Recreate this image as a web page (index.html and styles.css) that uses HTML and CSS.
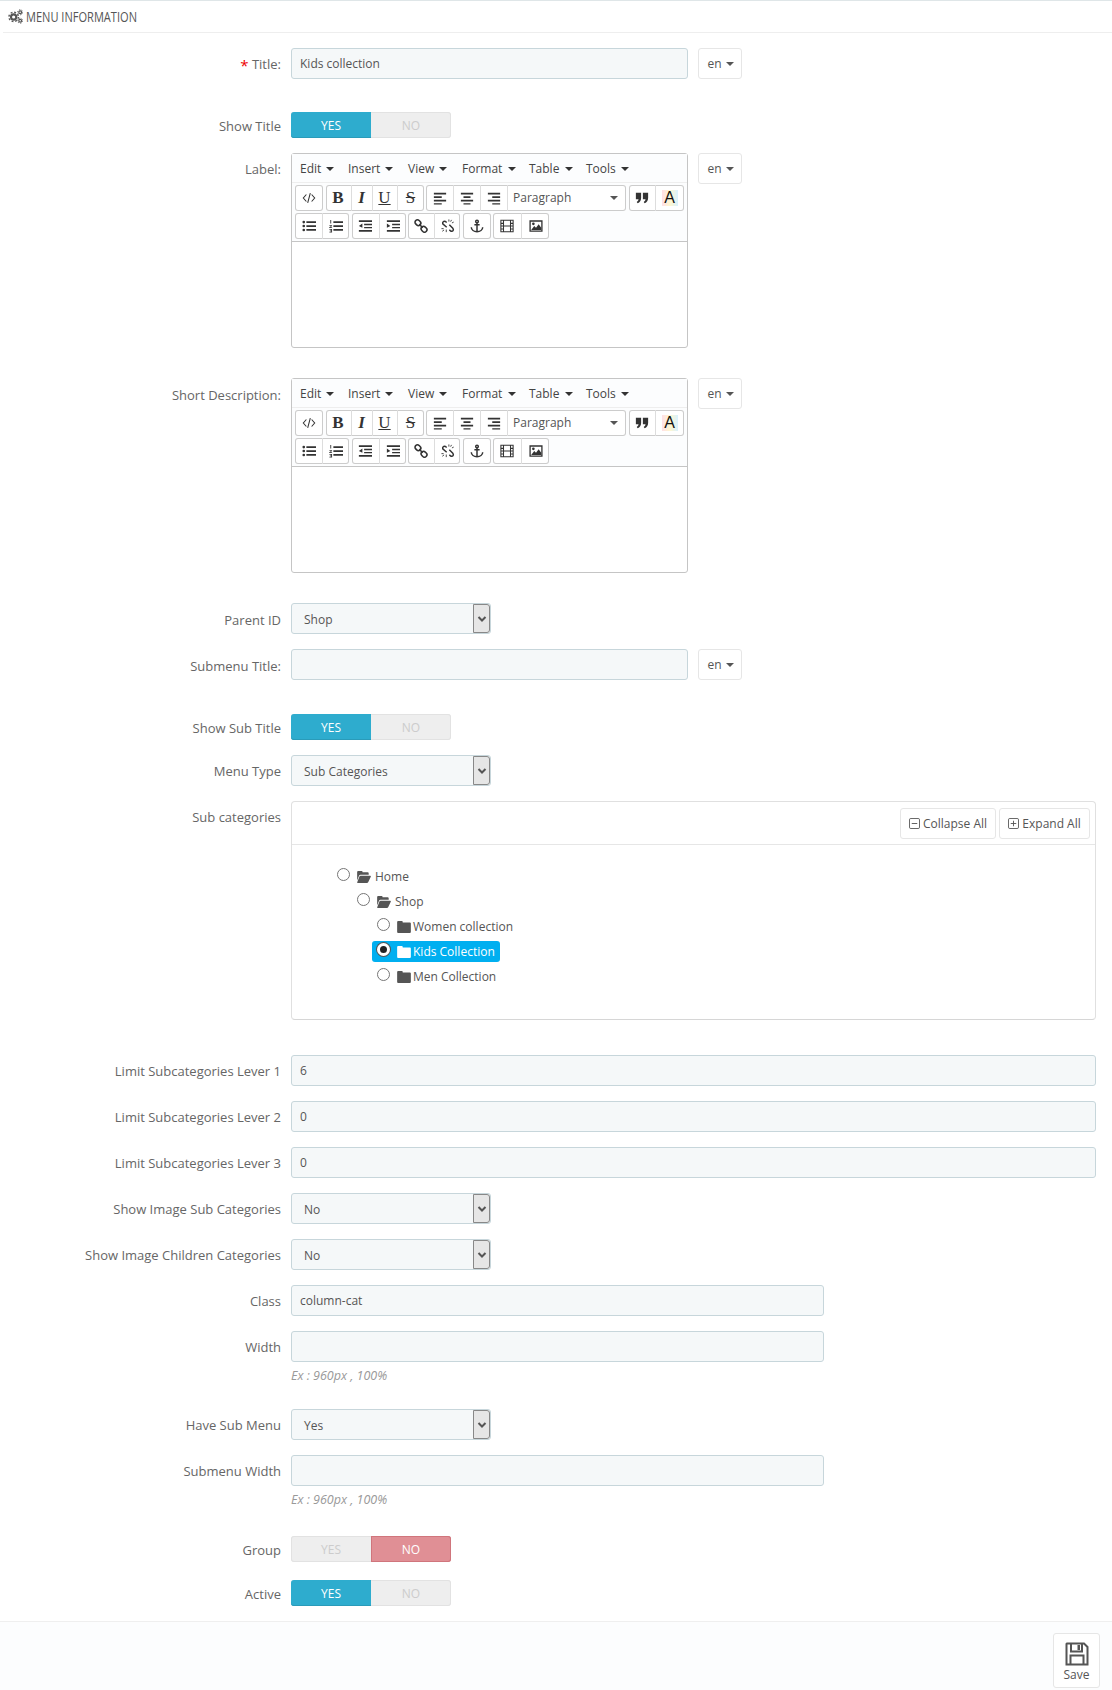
FILE: index.html
```html
<!DOCTYPE html>
<html lang="en">
<head>
<meta charset="utf-8">
<title>Menu Information</title>
<link rel="stylesheet" href="styles.css">
</head>
<body>
<svg class="defs" width="0" height="0" aria-hidden="true">
  <defs>
    <symbol id="i-code" viewBox="0 0 16 16"><path d="M5 4 1.500 8 5 12M11 4l3.500 4L11 12M9.500 2.500 6.500 13.500" fill="none" stroke="#333" stroke-width="1.200"/></symbol>
    <symbol id="i-left" viewBox="0 0 16 16"><path d="M1 2h14v2H1zM1 6h9v2H1zM1 10h14v2H1zM1 14h9v1.500H1z" fill="#333"/></symbol>
    <symbol id="i-center" viewBox="0 0 16 16"><path d="M1 2h14v2H1zM4 6h8v2H4zM1 10h14v2H1zM4 14h8v1.500H4z" fill="#333"/></symbol>
    <symbol id="i-right" viewBox="0 0 16 16"><path d="M1 2h14v2H1zM6 6h9v2H6zM1 10h14v2H1zM6 14h9v1.500H6z" fill="#333"/></symbol>
    <symbol id="i-quote" viewBox="0 0 16 16"><path d="M1 2h6v6c0 3-1.500 5-4 6l-1-1.500c1.300-.7 2-1.800 2-3H1zM9 2h6v6c0 3-1.500 5-4 6l-1-1.500c1.300-.7 2-1.800 2-3H9z" fill="#333"/></symbol>
    <symbol id="i-ul" viewBox="0 0 16 16"><path d="M5 2.500h11v2H5zM5 7h11v2H5zM5 11.500h11v2H5z" fill="#333"/><circle cx="2" cy="3.500" r="1.500" fill="#333"/><circle cx="2" cy="8" r="1.500" fill="#333"/><circle cx="2" cy="12.500" r="1.500" fill="#333"/></symbol>
    <symbol id="i-ol" viewBox="0 0 16 16"><path d="M5 2.500h11v2H5zM5 7h11v2H5zM5 11.500h11v2H5z" fill="#333"/><path d="M1.500 1h1v4h-1zM.5 7h3v1l-2 1.500h2v.8H.3V9.500l2.200-1.600H.5zM.5 11.500h3v4h-3v-.8h2v-.8h-1.500v-.7h1.500v-.9h-2z" fill="#333"/></symbol>
    <symbol id="i-outdent" viewBox="0 0 16 16"><path d="M1 1.500h15v2H1zM7 5.500h9v1.500H7zM7 9h9v1.500H7zM1 12.500h15v2H1zM5 5v5L1 8z" fill="#333"/></symbol>
    <symbol id="i-indent" viewBox="0 0 16 16"><path d="M1 1.500h15v2H1zM7 5.500h9v1.500H7zM7 9h9v1.500H7zM1 12.500h15v2H1zM1 5v5l4-2z" fill="#333"/></symbol>
    <symbol id="i-link" viewBox="0 0 16 16"><g fill="none" stroke="#333" stroke-width="1.800"><rect x="1" y="1.500" width="7" height="5.500" rx="2.700" transform="rotate(45 4.500 4.200)"/><rect x="8" y="9" width="7" height="5.500" rx="2.700" transform="rotate(45 11.500 11.700)"/><path d="M6 6l4 4"/></g></symbol>
    <symbol id="i-unlink" viewBox="0 0 16 16"><g fill="none" stroke="#333" stroke-width="1.700"><path d="M6.500 4 5 2.800C3 2 1.500 3.500 2 5.500L6.500 9.500M9.500 6.500 13.500 10.500c1.500 2 0 4-2 3.500L9.500 12.500"/><path d="M9 .5v2.500M12 1l-1 2M14.500 3.500l-2 1M.5 11h2.500M1.500 14l2-1.500M6 12v3" stroke-width="1"/></g></symbol>
    <symbol id="i-anchor" viewBox="0 0 16 16"><g fill="none" stroke="#333" stroke-width="1.700"><circle cx="8" cy="2.800" r="1.500"/><path d="M8 4v10.500M5 6.500h6M1.500 9.500c0 3 3 5 6.500 5s6.500-2 6.500-5"/></g></symbol>
    <symbol id="i-media" viewBox="0 0 16 16"><path d="M1 1.500h14v13H1zM4 1.500v13M12 1.500v13M1 5h3M1 8h14M1 11.500h3M12 5h3M12 11.500h3" fill="none" stroke="#333" stroke-width="1.200"/></symbol>
    <symbol id="i-image" viewBox="0 0 16 16"><path d="M.5 1.500h15v13H.5zm1.500 1.500v10h12V3z" fill="#333"/><circle cx="5" cy="5.500" r="1.500" fill="#333"/><path d="M2.500 12.500 6 8l2 2 3-4 3 4v2.500z" fill="#333"/></symbol>
    <symbol id="i-folder" viewBox="0 0 16 14"><path d="M1.200 0h4.300a1 1 0 0 1 1 1v.7h8.300A1.200 1.200 0 0 1 16 3v9.800a1.200 1.200 0 0 1-1.200 1.200H1.200A1.200 1.200 0 0 1 0 12.800V1.200A1.200 1.200 0 0 1 1.200 0z" fill="currentColor"/></symbol>
    <symbol id="i-open" viewBox="0 0 16 14"><path d="M0 11V1.200A1.200 1.200 0 0 1 1.200 0h4.100a1 1 0 0 1 1 1v.6h6a1.200 1.200 0 0 1 1.200 1.200V4.500H4a2 2 0 0 0-1.800 1.100zM4 5.500h11.300c.6 0 .9.600.6 1.100L13 12.900c-.3.700-.9 1.100-1.600 1.100H.8c-.6 0-.9-.6-.6-1.100L2.800 6.200C3 5.800 3.500 5.500 4 5.500z" fill="currentColor"/></symbol>
  </defs>
</svg>

<header class="panel-head">
  <svg class="cogs" viewBox="0 0 16 16" aria-hidden="true"><g fill="none" stroke="#555"><circle cx="6" cy="8.500" r="2.800" stroke-width="2.200"/><circle cx="6" cy="8.500" r="5" stroke-width="1.500" stroke-dasharray="2 1.930"/><circle cx="13" cy="3.500" r="1.500" stroke-width="1.300"/><circle cx="13" cy="12.500" r="1.500" stroke-width="1.300"/><circle cx="13" cy="3.500" r="2.700" stroke-width="1" stroke-dasharray="1.300 1.500"/><circle cx="13" cy="12.500" r="2.700" stroke-width="1" stroke-dasharray="1.300 1.500"/></g></svg>
  <span class="head-text">MENU INFORMATION</span>
</header>

<form class="form">
  <div class="row gap-lang">
    <label class="label"><sup class="req">*</sup> Title:</label>
    <div class="field lang">
      <input class="input w-lang" type="text" value="Kids collection">
      <button type="button" class="en">en <i class="caret"></i></button>
    </div>
  </div>

  <div class="row">
    <label class="label label-toggle">Show Title</label>
    <div class="field">
      <div class="toggle"><span class="opt yes">YES</span><span class="opt off">NO</span></div>
    </div>
  </div>

  <div class="row gap-editor">
    <label class="label">Label:</label>
    <div class="field lang">
      <div class="editor">
        <div class="menubar">
          <span class="menu m-edit">Edit <i class="caret"></i></span><span class="menu m-insert">Insert <i class="caret"></i></span><span class="menu m-view">View <i class="caret"></i></span><span class="menu m-format">Format <i class="caret"></i></span><span class="menu m-table">Table <i class="caret"></i></span><span class="menu">Tools <i class="caret"></i></span>
        </div>
        <div class="toolbar">
          <div class="tb-row">
            <div class="grp"><span class="b w28"><svg class="ic"><use href="#i-code"/></svg></span></div>
            <div class="grp"><span class="b w25 t-b">B</span><span class="b w21 t-i">I</span><span class="b w25 t-u">U</span><span class="b w27 t-s">S</span></div>
            <div class="grp"><span class="b w27"><svg class="ic"><use href="#i-left"/></svg></span><span class="b w27"><svg class="ic"><use href="#i-center"/></svg></span><span class="b w27"><svg class="ic"><use href="#i-right"/></svg></span><span class="b para">Paragraph<i class="caret"></i></span></div>
            <div class="grp"><span class="b w26"><svg class="ic"><use href="#i-quote"/></svg></span><span class="b w29"><span class="color-a">A</span></span></div>
          </div>
          <div class="tb-row">
            <div class="grp"><span class="b w27"><svg class="ic"><use href="#i-ul"/></svg></span><span class="b w27"><svg class="ic"><use href="#i-ol"/></svg></span></div>
            <div class="grp"><span class="b w27"><svg class="ic"><use href="#i-outdent"/></svg></span><span class="b w27"><svg class="ic"><use href="#i-indent"/></svg></span></div>
            <div class="grp"><span class="b w26"><svg class="ic"><use href="#i-link"/></svg></span><span class="b w26"><svg class="ic"><use href="#i-unlink"/></svg></span></div>
            <div class="grp"><span class="b w28"><svg class="ic"><use href="#i-anchor"/></svg></span></div>
            <div class="grp"><span class="b w28"><svg class="ic"><use href="#i-media"/></svg></span><span class="b w28"><svg class="ic"><use href="#i-image"/></svg></span></div>
          </div>
        </div>
        <div class="edit-area"></div>
      </div>
      <button type="button" class="en">en <i class="caret"></i></button>
    </div>
  </div>

  <div class="row gap-editor">
    <label class="label label-low">Short Description:</label>
    <div class="field lang">
      <div class="editor">
        <div class="menubar">
          <span class="menu m-edit">Edit <i class="caret"></i></span><span class="menu m-insert">Insert <i class="caret"></i></span><span class="menu m-view">View <i class="caret"></i></span><span class="menu m-format">Format <i class="caret"></i></span><span class="menu m-table">Table <i class="caret"></i></span><span class="menu">Tools <i class="caret"></i></span>
        </div>
        <div class="toolbar">
          <div class="tb-row">
            <div class="grp"><span class="b w28"><svg class="ic"><use href="#i-code"/></svg></span></div>
            <div class="grp"><span class="b w25 t-b">B</span><span class="b w21 t-i">I</span><span class="b w25 t-u">U</span><span class="b w27 t-s">S</span></div>
            <div class="grp"><span class="b w27"><svg class="ic"><use href="#i-left"/></svg></span><span class="b w27"><svg class="ic"><use href="#i-center"/></svg></span><span class="b w27"><svg class="ic"><use href="#i-right"/></svg></span><span class="b para">Paragraph<i class="caret"></i></span></div>
            <div class="grp"><span class="b w26"><svg class="ic"><use href="#i-quote"/></svg></span><span class="b w29"><span class="color-a">A</span></span></div>
          </div>
          <div class="tb-row">
            <div class="grp"><span class="b w27"><svg class="ic"><use href="#i-ul"/></svg></span><span class="b w27"><svg class="ic"><use href="#i-ol"/></svg></span></div>
            <div class="grp"><span class="b w27"><svg class="ic"><use href="#i-outdent"/></svg></span><span class="b w27"><svg class="ic"><use href="#i-indent"/></svg></span></div>
            <div class="grp"><span class="b w26"><svg class="ic"><use href="#i-link"/></svg></span><span class="b w26"><svg class="ic"><use href="#i-unlink"/></svg></span></div>
            <div class="grp"><span class="b w28"><svg class="ic"><use href="#i-anchor"/></svg></span></div>
            <div class="grp"><span class="b w28"><svg class="ic"><use href="#i-media"/></svg></span><span class="b w28"><svg class="ic"><use href="#i-image"/></svg></span></div>
          </div>
        </div>
        <div class="edit-area"></div>
      </div>
      <button type="button" class="en">en <i class="caret"></i></button>
    </div>
  </div>

  <div class="row">
    <label class="label label-low">Parent ID</label>
    <div class="field"><div class="select"><span>Shop</span><i class="sel-btn"><svg viewBox="0 0 10 8"><path d="M1.500 2 5 5.500 8.500 2" fill="none" stroke="#555" stroke-width="2"/></svg></i></div></div>
  </div>

  <div class="row gap-lang-wide">
    <label class="label label-low">Submenu Title:</label>
    <div class="field lang">
      <input class="input w-lang" type="text" value="">
      <button type="button" class="en">en <i class="caret"></i></button>
    </div>
  </div>

  <div class="row">
    <label class="label label-toggle">Show Sub Title</label>
    <div class="field">
      <div class="toggle"><span class="opt yes">YES</span><span class="opt off">NO</span></div>
    </div>
  </div>

  <div class="row">
    <label class="label">Menu Type</label>
    <div class="field"><div class="select"><span>Sub Categories</span><i class="sel-btn"><svg viewBox="0 0 10 8"><path d="M1.500 2 5 5.500 8.500 2" fill="none" stroke="#555" stroke-width="2"/></svg></i></div></div>
  </div>

  <div class="row gap-tree">
    <label class="label">Sub categories</label>
    <div class="field">
      <div class="tree-panel">
        <div class="tree-head">
          <button type="button" class="tree-btn btn-collapse"><svg class="sq" viewBox="0 0 12 12"><rect x=".5" y=".5" width="11" height="11" rx="1.500" fill="none" stroke="#555"/><path d="M3 6h6" stroke="#555"/></svg> Collapse All</button>
          <button type="button" class="tree-btn btn-expand"><svg class="sq" viewBox="0 0 12 12"><rect x=".5" y=".5" width="11" height="11" rx="1.500" fill="none" stroke="#555"/><path d="M3 6h6M6 3v6" stroke="#555"/></svg> Expand All</button>
        </div>
        <ul class="tree">
          <li>
            <div class="node"><i class="radio"></i><svg class="fld fld-open"><use href="#i-open"/></svg><span>Home</span></div>
            <ul>
              <li>
                <div class="node"><i class="radio"></i><svg class="fld fld-open"><use href="#i-open"/></svg><span>Shop</span></div>
                <ul>
                  <li><div class="node"><i class="radio"></i><svg class="fld"><use href="#i-folder"/></svg><span>Women collection</span></div></li>
                  <li><div class="node selected"><i class="radio on"></i><svg class="fld"><use href="#i-folder"/></svg><span>Kids Collection</span></div></li>
                  <li><div class="node"><i class="radio"></i><svg class="fld"><use href="#i-folder"/></svg><span>Men Collection</span></div></li>
                </ul>
              </li>
            </ul>
          </li>
        </ul>
      </div>
    </div>
  </div>

  <div class="row">
    <label class="label">Limit Subcategories Lever 1</label>
    <div class="field"><input class="input w-full" type="text" value="6"></div>
  </div>
  <div class="row">
    <label class="label">Limit Subcategories Lever 2</label>
    <div class="field"><input class="input w-full" type="text" value="0"></div>
  </div>
  <div class="row">
    <label class="label">Limit Subcategories Lever 3</label>
    <div class="field"><input class="input w-full" type="text" value="0"></div>
  </div>
  <div class="row">
    <label class="label">Show Image Sub Categories</label>
    <div class="field"><div class="select"><span>No</span><i class="sel-btn"><svg viewBox="0 0 10 8"><path d="M1.500 2 5 5.500 8.500 2" fill="none" stroke="#555" stroke-width="2"/></svg></i></div></div>
  </div>
  <div class="row">
    <label class="label">Show Image Children Categories</label>
    <div class="field"><div class="select"><span>No</span><i class="sel-btn"><svg viewBox="0 0 10 8"><path d="M1.500 2 5 5.500 8.500 2" fill="none" stroke="#555" stroke-width="2"/></svg></i></div></div>
  </div>
  <div class="row">
    <label class="label">Class</label>
    <div class="field"><input class="input w-mid" type="text" value="column-cat"></div>
  </div>
  <div class="row gap-help">
    <label class="label">Width</label>
    <div class="field"><input class="input w-mid" type="text" value=""><p class="help">Ex : 960px , 100%</p></div>
  </div>
  <div class="row">
    <label class="label">Have Sub Menu</label>
    <div class="field"><div class="select"><span>Yes</span><i class="sel-btn"><svg viewBox="0 0 10 8"><path d="M1.500 2 5 5.500 8.500 2" fill="none" stroke="#555" stroke-width="2"/></svg></i></div></div>
  </div>
  <div class="row gap-help-wide">
    <label class="label">Submenu Width</label>
    <div class="field"><input class="input w-mid" type="text" value=""><p class="help">Ex : 960px , 100%</p></div>
  </div>
  <div class="row gap-group">
    <label class="label label-toggle">Group</label>
    <div class="field">
      <div class="toggle"><span class="opt off">YES</span><span class="opt no">NO</span></div>
    </div>
  </div>
  <div class="row row-last">
    <label class="label label-toggle">Active</label>
    <div class="field">
      <div class="toggle"><span class="opt yes">YES</span><span class="opt off">NO</span></div>
    </div>
  </div>
</form>

<footer class="panel-foot">
  <button type="button" class="save">
    <svg class="save-ic" viewBox="0 0 24 24" aria-hidden="true"><path d="M2 1.500h17l3.500 3.500v17.500h-21V2z" fill="none" stroke="#555" stroke-width="2"/><path d="M6 2v7.500h11V2" fill="none" stroke="#555" stroke-width="2"/><rect x="12.500" y="3" width="2.500" height="5" fill="#555"/><path d="M5.500 22v-8.500h13V22" fill="none" stroke="#555" stroke-width="2"/></svg>
    <span>Save</span>
  </button>
</footer>
</body>
</html>
```

FILE: styles.css
```css
* { box-sizing: border-box; }
html, body { margin: 0; padding: 0; }
body {
  width: 1112px;
  height: 1690px;
  overflow: hidden;
  background: #fff;
  font-family: "Open Sans", "Liberation Sans", sans-serif;
  font-size: 12px;
  line-height: 18px;
  color: #555;
  border-top: 1px solid #dfe6e8;
}
.defs { position: absolute; }

.panel-head {
  height: 32px;
  margin-left: 3px;
  padding-left: 5px;
  display: flex;
  align-items: center;
  gap: 3px;
  border-bottom: 1px solid #eee;
}
.cogs { width: 15px; height: 15px; flex: none; }
.head-text {
  font-size: 14px;
  color: #555;
  display: inline-block;
  transform: scaleX(.79);
  transform-origin: left center;
}

.form { padding-top: 15px; }
.row {
  display: grid;
  grid-template-columns: 281px 805px;
  column-gap: 10px;
  margin-bottom: 15px;
}
.gap-lang { margin-bottom: 33px; }
.gap-lang-wide { margin-bottom: 34px; }
.gap-editor { margin-bottom: 30px; }
.gap-tree { margin-bottom: 35px; }
.gap-help { margin-bottom: 24px; }
.gap-help-wide { margin-bottom: 27px; }
.gap-group { margin-bottom: 18px; }
.row-last { margin-bottom: 15px; }

.label {
  text-align: right;
  padding-top: 7px;
  font-size: 13px;
  color: #666;
}
.label-toggle { padding-top: 5px; }
.label-low { padding-top: 8px; }
.req { color: #e00; font-size: 15px; line-height: 0; vertical-align: -2px; }

.field { min-width: 0; }
.lang { display: flex; align-items: flex-start; gap: 10px; }

.input {
  display: block;
  height: 31px;
  padding: 0 8px;
  font: 12px/18px "Open Sans", sans-serif;
  color: #555;
  background: #f5f8f9;
  border: 1px solid #c7d6db;
  border-radius: 3px;
  outline: 0;
}
.w-lang { width: 397px; }
.w-full { width: 805px; }
.w-mid { width: 533px; }

.en {
  width: 44px;
  height: 31px;
  padding: 0 0 0 1px;
  flex: none;
  font: 12px/18px "Open Sans", sans-serif;
  color: #555;
  background: #fff;
  border: 1px solid #e6e6e6;
  border-radius: 3px;
}
.caret {
  display: inline-block;
  width: 0;
  height: 0;
  margin-left: 1px;
  vertical-align: 2px;
  border-left: 4px solid transparent;
  border-right: 4px solid transparent;
  border-top: 4px solid #555;
}

.toggle {
  display: flex;
  width: 160px;
  height: 26px;
  background: #eee;
  border-radius: 3px;
  box-shadow: inset 0 0 0 1px #e2e2e2;
}
.opt {
  width: 80px;
  text-align: center;
  line-height: 25px;
  padding-top: 1px;
  font-size: 12px;
}
.off { color: #ccc; }
.yes { color: #fff; background: #2eacce; border-radius: 3px 0 0 3px; box-shadow: inset 0 -1px 0 #2a9bb9; }
.no { color: #fff; background: #e08f95; border-radius: 0 3px 3px 0; box-shadow: inset 0 0 0 1px #d0757c; }

.editor {
  width: 397px;
  height: 195px;
  border: 1px solid #c5c5c5;
  border-radius: 3px;
  background: #fff;
  display: flex;
  flex-direction: column;
}
.menubar {
  height: 29px;
  padding: 2px 0 0 8px;
  display: flex;
  align-items: center;
  background: #fcfdfe;
  border-bottom: 1px solid #eee;
  color: #333;
}
.menu { white-space: nowrap; color: #444; }
.menu .caret { margin-left: 2px; border-top-color: #333; }
.m-edit { width: 48px; }
.m-insert { width: 60px; }
.m-view { width: 54px; }
.m-format { width: 67px; }
.m-table { width: 57px; }

.toolbar {
  height: 59px;
  padding: 2px 0 0 3px;
  background: #fcfdfe;
  border-bottom: 1px solid #c5c5c5;
}
.tb-row { display: flex; gap: 2.5px; margin-bottom: 2px; }
.grp {
  display: flex;
  height: 26px;
  background: #fff;
  border-radius: 3px;
  box-shadow: inset 0 0 0 1px #ccc;
}
.b {
  display: flex;
  align-items: center;
  justify-content: center;
  border-left: 1px solid #ddd;
  color: #333;
}
.b:first-child { border-left: 0; }
.w21 { width: 21px; }
.w25 { width: 25px; }
.w26 { width: 26px; }
.w27 { width: 27px; }
.w28 { width: 28px; }
.w29 { width: 29px; }
.ic { width: 14px; height: 14px; }
.t-b, .t-i, .t-u, .t-s { font-family: "Liberation Serif", serif; font-size: 17px; }
.t-b { font-weight: 700; }
.t-i { font-style: italic; font-weight: 700; }
.t-u { text-decoration: underline; }
.t-s { text-decoration: line-through; }
.para {
  width: 119px;
  justify-content: space-between;
  padding: 0 8px 0 5px;
  color: #555;
}
.color-a {
  width: 16px;
  height: 16px;
  text-align: center;
  font: 400 16px/16px "Liberation Sans", sans-serif;
  color: #111;
  background: linear-gradient(90deg, #ffdfe6, #fff7cf 50%, #d8f1ff);
}
.edit-area { flex: 1; }

.select {
  position: relative;
  width: 200px;
  height: 31px;
  padding: 0 12px;
  line-height: 31px;
  background: #f5f8f9;
  border: 1px solid #c7d6db;
  border-radius: 3px;
}
.sel-btn {
  position: absolute;
  top: 0;
  right: 0;
  width: 17px;
  height: 29px;
  display: flex;
  align-items: center;
  justify-content: center;
  background: #e6e6e6;
  border: 1px solid #888;
  border-radius: 0 3px 3px 0;
}
.sel-btn svg { width: 10px; height: 8px; }

.tree-panel {
  height: 219px;
  border: 1px solid #e0e0e0;
  border-bottom-color: #d6d6d6;
  border-radius: 4px;
  background: #fff;
}
.tree-head {
  height: 43px;
  padding: 6px 5px 0 0;
  display: flex;
  justify-content: flex-end;
  gap: 3px;
  border-bottom: 1px solid #e6e6e6;
}
.tree-btn {
  height: 31px;
  padding: 0;
  font: 12px/18px "Open Sans", sans-serif;
  color: #555;
  background: #fff;
  border: 1px solid #e6e6e6;
  border-radius: 3px;
}
.btn-collapse { width: 96px; }
.btn-expand { width: 91px; }
.sq { width: 11px; height: 11px; vertical-align: -1px; }
.tree, .tree ul { list-style: none; margin: 0; padding: 0; }
.tree { padding: 21px 0 0 40px; }
.tree ul { padding-left: 20px; }
.node {
  display: inline-flex;
  align-items: center;
  height: 21px;
  margin-bottom: 4px;
  padding: 0 5px;
  border-radius: 3px;
  white-space: nowrap;
}
.radio {
  width: 13px;
  height: 13px;
  margin: -4px 7px 0 0;
  flex: none;
  background: #fff;
  border: 1px solid #767676;
  border-radius: 50%;
}
.radio.on { border: 3px solid #fff; background: #222; box-shadow: 0 0 0 1px #555; }
.fld { width: 14px; height: 12px; margin-right: 2px; color: #555; }
.fld-open { margin-right: 4px; }
.selected { background: #00aff0; color: #fff; }
.selected .fld { color: #fff; }

.help {
  margin: 5px 0 0;
  font-size: 12.5px;
  font-style: italic;
  color: #999;
  line-height: 18px;
}

.panel-foot {
  height: 69px;
  padding: 11px 12px 0 0;
  display: flex;
  justify-content: flex-end;
  align-items: flex-start;
  background: #fcfdfe;
  border-top: 1px solid #efefef;
}
.save {
  width: 47px;
  height: 55px;
  padding: 8px 0 0;
  display: flex;
  flex-direction: column;
  align-items: center;
  font: 12px/18px "Open Sans", sans-serif;
  color: #555;
  background: #fff;
  border: 1px solid #e6e6e6;
  border-radius: 3px;
}
.save-ic { width: 24px; height: 24px; }
```
